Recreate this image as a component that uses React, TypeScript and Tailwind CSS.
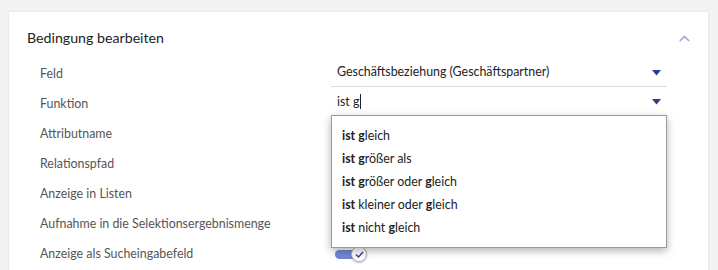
import { ChevronUp } from 'lucide-react'

const labels = [
    'Feld',
    'Funktion',
    'Attributname',
    'Relationspfad',
    'Anzeige in Listen',
    'Aufnahme in die Selektionsergebnismenge',
    'Anzeige als Sucheingabefeld',
]

// suggestions: [text, bold] pieces
const options: [string, boolean][][] = [
    [['ist ', true], ['g', true], ['leich', false]],
    [['ist ', true], ['g', true], ['rößer als', false]],
    [['ist ', true], ['g', true], ['rößer oder ', false], ['g', true], ['leich', false]],
    [['ist ', true], ['kleiner oder ', false], ['g', true], ['leich', false]],
    [['ist ', true], ['nicht ', false], ['g', true], ['leich', false]],
]

function Caret() {
    return (
        <svg width="9" height="6" viewBox="0 0 9 6" className="shrink-0">
            <path d="M0 0 H9 L4.5 5.5 Z" fill="#2e3d8f" />
        </svg>
    )
}

export default function App() {
    return (
        <div className="h-[270px] w-[718px] overflow-hidden bg-[#f3f3f3] pl-[9px] pt-[12px] font-['Lato',sans-serif] text-[#333]">
            <div className="relative h-[300px] w-[699px] bg-white shadow-[0_0_2px_rgba(0,0,0,0.12)]">
                {/* header */}
                <div className="flex items-center justify-between pl-[18px] pr-[15px] pt-[16px]">
                    <h2 className="text-[14.2px] leading-[20px] text-[#222]">Bedingung bearbeiten</h2>
                    <ChevronUp size={17} strokeWidth={2.2} className="text-[#a4afd6]" />
                </div>

                <div className="mt-[11px] grid grid-cols-[291px_336px] pl-[31px]">
                    {/* labels */}
                    <div className="flex flex-col">
                        {labels.map((l) => (
                            <div key={l} className="h-[30px] text-[12.4px] leading-[30px] text-[#555]">
                                {l}
                            </div>
                        ))}
                    </div>

                    {/* inputs */}
                    <div className="flex flex-col">
                        <div className="flex h-[28px] items-center justify-between border-b border-[#dcdcdc] pl-[6px] pr-[6px] text-[12.4px] text-[#222]">
                            <span>Geschäftsbeziehung (Geschäftspartner)</span>
                            <Caret />
                        </div>
                        <div className="mt-[1px] flex h-[30px] items-center justify-between border-b-2 border-[#d9a21b] pl-[6px] pr-[6px] text-[12.4px] text-[#222]">
                            <span className="flex items-center">
                                ist g<span className="ml-[1px] inline-block h-[15px] w-px bg-[#222]" />
                            </span>
                            <Caret />
                        </div>
                        <div className="h-[121px]" />
                        <div className="flex h-[30px] items-center pl-[4px]">
                            <div className="relative flex h-[16px] w-[34px] items-center">
                                <div className="h-[9px] w-[22px] rounded-full bg-[#7487d6]" />
                                <div className="absolute left-[16px] top-0 flex h-[16px] w-[16px] items-center justify-center rounded-full border border-[#b9b9b9] bg-white shadow-[0_1px_2px_rgba(0,0,0,0.25)]">
                                    <svg width="9" height="7" viewBox="0 0 9 7">
                                        <path d="M1 3.5 L3.5 6 L8 1" fill="none" stroke="#2e3d8f" strokeWidth="1.4" />
                                    </svg>
                                </div>
                            </div>
                        </div>
                    </div>
                </div>

                {/* autocomplete menu */}
                <div className="absolute left-[322px] top-[103px] w-[336px] border border-[#9a9a9a] bg-white py-[8px] shadow-[0_3px_8px_rgba(0,0,0,0.3)]">
                    {options.map((parts, i) => (
                        <div key={i} className="h-[23px] pl-[10px] text-[12.4px] leading-[23px] text-[#222]">
                            {parts.map(([t, b], j) => (
                                <span key={j} className={b ? 'font-bold' : ''}>
                                    {t}
                                </span>
                            ))}
                        </div>
                    ))}
                </div>
            </div>
        </div>
    )
}
